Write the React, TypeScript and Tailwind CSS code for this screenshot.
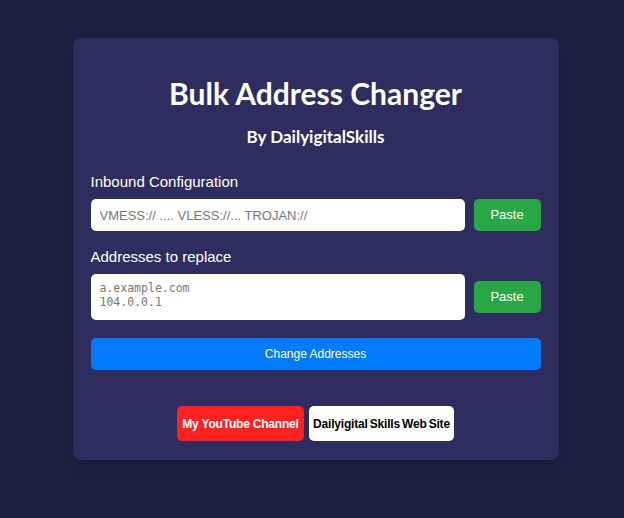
import React from "react";

const App: React.FC = () => {
  return (
    <div className="min-h-screen bg-[#1f1f41] flex justify-center pt-[38px] pl-[7px] font-['Liberation_Sans',Arial,sans-serif]">
      <div className="w-[486px] h-[422px] bg-[#2f2d5f] rounded-lg shadow-lg px-[18px] pt-[38px] flex flex-col">
        <h1 className="text-center text-white font-bold text-[30px] leading-[34px] font-['Lato','DejaVu_Sans',sans-serif]">
          Bulk Address Changer
        </h1>
        <p className="text-center text-white font-bold text-[17px] leading-[20px] mt-[17px] font-['Lato','DejaVu_Sans',sans-serif]">
          By DailyigitalSkills
        </p>

        <label className="text-white text-[15px] leading-[18px] mt-[26px]">
          Inbound Configuration
        </label>
        <div className="flex items-center gap-[9px] mt-[8px]">
          <input
            className="flex-1 h-[32px] bg-white rounded-[5px] px-[9px] text-[13px] text-gray-800 placeholder:text-[#777] outline-none"
            placeholder="VMESS:// .... VLESS://... TROJAN://"
          />
          <button className="w-[67px] h-[32px] bg-[#28a745] text-white rounded-[5px] text-[13px]">
            Paste
          </button>
        </div>

        <label className="text-white text-[15px] leading-[18px] mt-[17px]">
          Addresses to replace
        </label>
        <div className="flex items-center gap-[9px] mt-[8px]">
          <textarea
            className="flex-1 h-[46px] bg-white rounded-[5px] px-[9px] py-[7px] text-[11.5px] leading-[14px] resize-none outline-none placeholder:text-[#777] font-['DejaVu_Sans_Mono','Liberation_Mono',monospace]"
            placeholder={"a.example.com\n104.0.0.1"}
          />
          <button className="w-[67px] h-[32px] bg-[#28a745] text-white rounded-[5px] text-[13px]">
            Paste
          </button>
        </div>

        <button className="mt-[18px] h-[32px] w-full bg-[#007bff] text-white rounded-[5px] text-[12px]">
          Change Addresses
        </button>

        <div className="flex justify-center gap-[5px] mt-[36px]">
          <a className="w-[127px] h-[35px] bg-[#ff2020] text-white rounded-[5px] font-bold text-[12px] flex items-center justify-center tracking-[-0.2px]">
            My YouTube Channel
          </a>
          <a className="w-[145px] h-[35px] bg-white text-black rounded-[5px] font-bold text-[12px] flex items-center justify-center tracking-[-0.2px] [word-spacing:-1px]">
            Dailyigital Skills Web Site
          </a>
        </div>
      </div>
    </div>
  );
};

export default App;
